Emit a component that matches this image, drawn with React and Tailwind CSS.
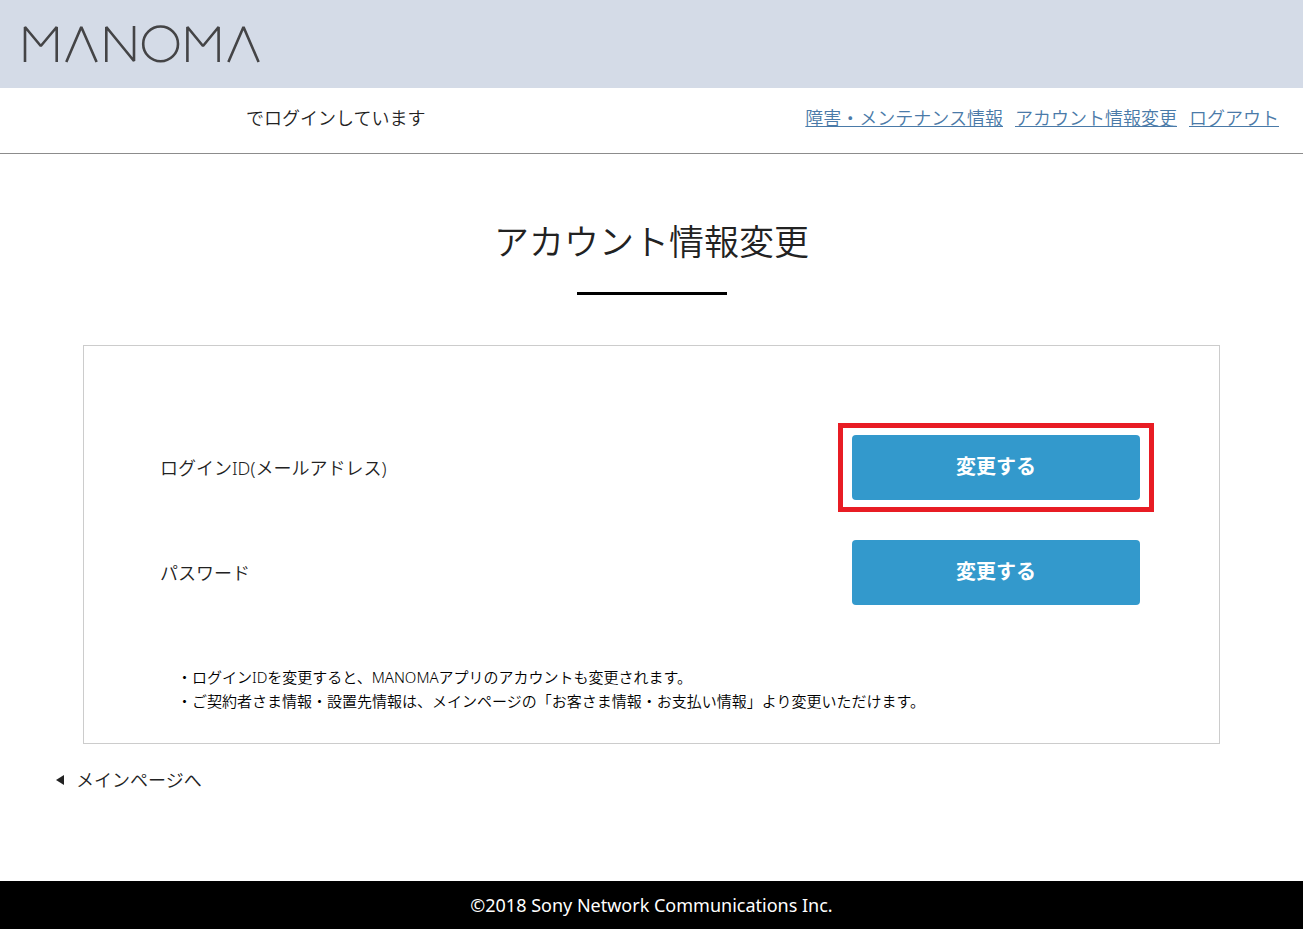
const NAV_LINKS = [
  { label: "障害・メンテナンス情報", href: "#maintenance" },
  { label: "アカウント情報変更", href: "#account" },
  { label: "ログアウト", href: "#logout" },
];

const SETTINGS = [
  { id: "login-id", label: "ログインID(メールアドレス)", highlighted: true },
  { id: "password", label: "パスワード", highlighted: false },
];

const NOTES = [
  "・ログインIDを変更すると、MANOMAアプリのアカウントも変更されます。",
  "・ご契約者さま情報・設置先情報は、メインページの「お客さま情報・お支払い情報」より変更いただけます。",
];

/* BRAND LOGO */
function Logo() {
  return (
    <svg
      role="img"
      aria-label="MANOMA"
      width="238"
      height="40"
      viewBox="0 0 238 40"
      fill="none"
      stroke="#444446"
      strokeWidth="2.6"
      strokeLinejoin="bevel"
    >
      <polyline points="2,38 2,3 17.8,22 33.7,3 33.7,38" />
      <polyline points="43.3,38 58.3,3 73.6,38" />
      <polyline points="83.3,38 83.3,3 111,37 111,2" />
      <circle cx="137.6" cy="19.9" r="17.4" />
      <polyline points="164.4,38 164.4,3 180,22 195.6,3 195.6,38" />
      <polyline points="205.4,38 220.5,3 235.6,38" />
    </svg>
  );
}

function SettingRow({ id, label, highlighted }) {
  return (
    <div className="flex items-center justify-between">
      <span id={id} className="text-lg">
        {label}
      </span>
      <div className="relative">
        <button
          type="button"
          aria-describedby={id}
          className="block h-[65px] w-72 cursor-pointer rounded bg-[#3399cc] pb-0.5 text-xl font-bold text-white"
        >
          変更する
        </button>
        {highlighted && (
          <div className="pointer-events-none absolute -inset-x-3.5 -inset-y-3 border-5 border-[#e81c24]" />
        )}
      </div>
    </div>
  );
}

export default function App() {
  return (
    <div className="flex min-h-screen flex-col bg-white font-['Noto_Sans','Noto_Sans_CJK_JP',sans-serif] font-[350] text-[#222222]">

      {/* HEADER */}
      <header className="flex h-22 items-center bg-[#d4dbe7] px-[23px]">
        <a href="#top">
          <Logo />
        </a>
      </header>

      {/* LOGIN BAR */}
      <div className="flex items-center justify-between border-b border-[#8c8c8c] pt-4 pr-6 pb-[21px] pl-[246px]">
        <p className="text-lg">でログインしています</p>
        <nav className="flex gap-3">
          {NAV_LINKS.map((link) => (
            <a
              key={link.href}
              href={link.href}
              className="text-lg text-[#4a7aa8] underline"
            >
              {link.label}
            </a>
          ))}
        </nav>
      </div>

      {/* CONTENT */}
      <main className="flex-1 px-14">
        <h1 className="mt-16 text-center text-[35px] leading-[48px]">
          アカウント情報変更
        </h1>
        <div className="mx-auto mt-[26px] h-[3px] w-[150px] bg-black" />

        <section className="mx-[27px] mt-[50px] border border-[#cccccc] px-19 pt-[89px] pb-[30px]">
          <div className="flex flex-col gap-10 pr-[3px]">
            {SETTINGS.map((item) => (
              <SettingRow key={item.id} {...item} />
            ))}
          </div>

          <ul className="mt-15 px-[17px] text-[15px] leading-6 text-black">
            {NOTES.map((note) => (
              <li key={note}>{note}</li>
            ))}
          </ul>
        </section>

        <a href="#main" className="mt-[22px] mb-8 inline-flex items-center gap-3 text-lg">
          <svg width="8" height="10" viewBox="0 0 8 10" fill="currentColor" aria-hidden="true">
            <path d="M8 0v10L0 5z" />
          </svg>
          メインページへ
        </a>
      </main>

      {/* FOOTER */}
      <footer className="flex h-12 items-center justify-center bg-black text-lg font-normal text-white">
        ©2018 Sony Network Communications Inc.
      </footer>
    </div>
  );
}
